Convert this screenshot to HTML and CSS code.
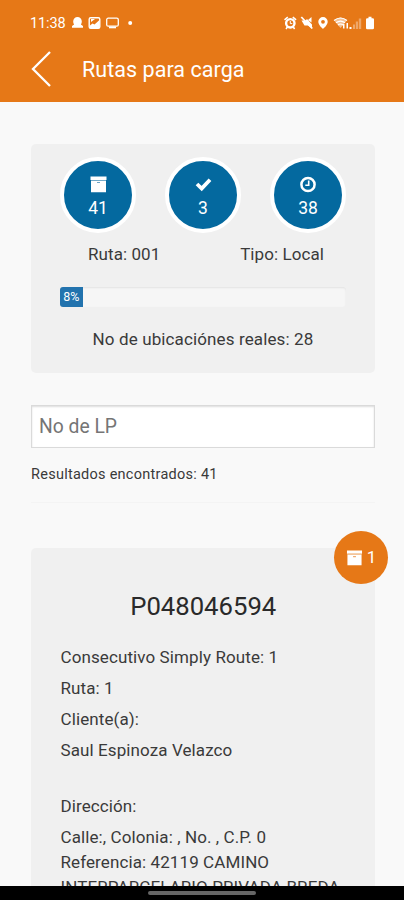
FILE: index.html
```html
<!DOCTYPE html>
<html lang="es">
<head>
<meta charset="utf-8">
<title>Rutas para carga</title>
<link rel="stylesheet" href="styles.css">
</head>
<body>
<header class="header">
  <div class="status">
    <span class="time">11:38</span>
    <svg class="left-icons" width="64" height="14" viewBox="0 0 64 14" fill="#fff">
      <path d="M5.500 1a4.300 4.300 0 0 1 4.300 4.300c0 1.500-.3 2.400-.9 3.200L11 10v1.800H0V10l2.100-1.500C1.500 7.700 1.200 6.800 1.200 5.300A4.300 4.300 0 0 1 5.500 1z"/>
      <rect x="17.200" y="1.700" width="10.600" height="10.600" rx="1.500" fill="none" stroke="#fff" stroke-width="1.400"/>
      <path d="M18 12V9.500l2.500-2 2 1 5-4.500v8zM19 3h4l-4 3z"/>
      <rect x="34.700" y="2.200" width="11.600" height="8" rx="1.500" fill="none" stroke="#fff" stroke-width="1.300"/>
      <path d="M37 10.500h7v1.800h-7z"/>
      <circle cx="58.200" cy="7" r="2"/>
    </svg>
    <svg class="right-icons" width="94" height="14" viewBox="0 0 94 14" fill="#fff">
      <path d="M0 3.300 3.300.6l1 1.200L1 4.500zM12.600 3.300 9.300.6l-1 1.200 3.300 2.700z"/>
      <circle cx="6.300" cy="7.300" r="4.200" fill="none" stroke="#fff" stroke-width="2.400"/>
      <path d="M6.300 5v2.600h2" fill="none" stroke="#fff"/>
      <path d="m2 13 2-3M10.600 13l-2-3" stroke="#fff" stroke-width="1.500"/>
      <path d="M17.500 4.500h4l1.500-1.500 5 5.500v4L24 9.500h-3.500zM24 4l3.500-3v5.500z"/>
      <path d="m17.300 1 11 11.500" stroke="#fff" stroke-width="1.800"/>
      <path fill-rule="evenodd" d="M39 1a4.700 4.700 0 0 1 4.700 4.700C43.700 9 39 13 39 13s-4.700-4-4.700-7.300A4.700 4.700 0 0 1 39 1zm0 2.900a1.900 1.900 0 1 0 0 3.800 1.900 1.900 0 0 0 0-3.800z"/>
      <path d="M50 4.300q6.500-5.500 13 0l-6.500 7.700z" opacity=".55"/>
      <g fill="none" stroke="#fff" stroke-width="1.200"><path d="M50 4.500q6.500-5 13 0M52 6.800q4.500-3.500 9 0M54 9q2.500-2 5 0"/></g>
      <path d="M59 8h1.500v4.500H59zM62.500 7H64v5.500h-1.500z"/>
      <path d="M65.500 11h2v2h-2z"/>
      <path opacity=".35" d="M69 8.500h2V13h-2zM71.800 5.500h2.200V13h-2.200zM74.800 2.500h2.400V13h-2.400z"/>
      <path d="M84.500.8h3v1.500h1.200q1.300 0 1.300 1.300v8.300q0 1.300-1.300 1.300h-5.400Q82 13.200 82 11.900V3.600q0-1.300 1.300-1.300h1.200z"/>
    </svg>
  </div>
  <div class="appbar">
    <svg width="20" height="36" viewBox="0 0 20 36" fill="none" stroke="#fff" stroke-width="2.300"><path d="M19 1 2 18l17 17"/></svg>
    <h1>Rutas para carga</h1>
  </div>
</header>
<main class="content">
  <section class="card summary">
    <div class="stats">
      <div class="stat"><svg width="17" height="17" viewBox="0 0 17 17"><path fill="#fff" d="M.5.500h16V4H.5zM1 4.500h15v11.800H1z"/><path fill="#6fa5c6" d="M1 4h15v.7H1zM7 6h3v1H7z"/></svg><span>41</span></div>
      <div class="stat"><svg width="17" height="17" viewBox="0 0 17 17"><path fill="none" stroke="#fff" stroke-width="3.800" d="m2 8 4.700 4.500L15 3.800"/></svg><span>3</span></div>
      <div class="stat"><svg width="17" height="17" viewBox="0 0 17 17"><g fill="none" stroke="#fff"><circle cx="8" cy="8.500" r="6.600" stroke-width="2.500"/><path d="M8.700 4.500v4.800H5.300" stroke-width="1.600"/></g></svg><span>38</span></div>
    </div>
    <div class="facts"><span>Ruta: 001</span><span>Tipo: Local</span></div>
    <div class="progress"><div class="bar" style="width:8%">8%</div></div>
    <p class="real">No de ubicaciónes reales: 28</p>
  </section>
  <input class="search" type="text" placeholder="No de LP">
  <p class="results">Resultados encontrados: 41</p>
  <hr class="rule">
  <section class="card package">
    <div class="badge"><svg width="17" height="16" viewBox="0 0 17 17"><path fill="#fff" d="M.5.500h16V4H.5zM1 4.500h15v11.800H1z"/><path fill="#efab70" d="M1 4h15v.9H1zM7 6.500h3v1.200H7z"/></svg><span>1</span></div>
    <h2>P048046594</h2>
    <p>Consecutivo Simply Route: 1</p>
    <p>Ruta: 1</p>
    <p>Cliente(a):</p>
    <p>Saul Espinoza Velazco</p>
    <p class="address-label">Dirección:</p>
    <p class="address">Calle:, Colonia: , No. , C.P. 0<br>Referencia: 42119 CAMINO<br>INTERPARCELARIO PRIVADA BREDA</p>
  </section>
</main>
<footer class="navbar"><div class="handle"></div></footer>
</body>
</html>
```
FILE: styles.css
```css
* { box-sizing: border-box; }
body {
  margin: 0;
  width: 404px;
  height: 900px;
  overflow: hidden;
  display: flex;
  flex-direction: column;
  background: #f9f9f9;
  color: #3a3a3a;
  font: 17px/25px Roboto, sans-serif;
}
h1, h2, p { margin: 0; font-weight: 400; }
svg { display: block; flex: none; }
.header { height: 102px; flex: none; background: #e67817; color: #fff; }
.status { display: flex; align-items: center; height: 46px; padding: 0 26px 0 30px; }
.time { width: 42px; font-size: 14.500px; letter-spacing: -.1px; }
.right-icons { margin-left: auto; }
.appbar { display: flex; align-items: center; gap: 31px; height: 46px; padding-left: 31px; }
.appbar h1 { font-size: 21.500px; letter-spacing: .05px; }
.content { flex: 1; min-height: 0; overflow: hidden; padding: 42px 29px 0 31px; }
.card { background: #f0f0f0; border-radius: 5px; }
.summary { height: 229px; padding: 13px 29px 0; }
.stats { display: flex; justify-content: space-between; }
.stat {
  display: flex;
  flex-direction: column;
  align-items: center;
  width: 76px;
  height: 76px;
  padding-top: 15px;
  border: 4px solid #fff;
  border-radius: 50%;
  background: #04699f;
  color: #fff;
  gap: 4px;
}
.stat span { font-size: 17.500px; line-height: 23px; }
.facts { display: flex; justify-content: space-between; padding: 0 22px 0 28px; margin-top: 9px; letter-spacing: .08px; }
.progress {
  height: 20px;
  margin-top: 20px;
  border-radius: 3px;
  background: #f6f6f6;
  box-shadow: inset 0 1px 2px #e2e2e2;
}
.bar {
  height: 100%;
  border-radius: 3px 0 0 3px;
  background: #2273ae;
  color: #fff;
  font-size: 12.500px;
  line-height: 20px;
  text-align: center;
}
.real { margin-top: 20px; text-align: center; letter-spacing: .12px; }
.search {
  display: block;
  width: 100%;
  height: 43px;
  margin-top: 32px;
  padding: 0 8px 1px 7px;
  border: 1px solid #dadada;
  border-radius: 0;
  background: #fff;
  box-shadow: inset 0 1px 2px #ddd;
  font: 19.300px Roboto, sans-serif;
}
.search::placeholder { color: #757575; }
.results { margin-top: 14px; font-size: 14.500px; letter-spacing: .26px; }
.rule { margin: 15px 0 0; border: 0; border-top: 1px solid #f4f4f4; }
.package { position: relative; height: 420px; margin-top: 45px; padding: 46px 20px 0 29.500px; letter-spacing: .1px; }
.badge {
  position: absolute;
  top: -17px;
  right: -13px;
  display: flex;
  align-items: center;
  justify-content: center;
  gap: 4px;
  width: 54px;
  height: 53px;
  border-radius: 50%;
  background: #e67817;
  color: #fff;
}
.package h2 { margin: 0 9px 26px 0; font-size: 25.700px; letter-spacing: 0; text-align: center; color: #2a2a2a; }
.package p { margin-bottom: 6px; }
.package .address-label { margin-top: 31px; }
.navbar { display: flex; justify-content: center; height: 14px; flex: none; padding-top: 5px; background: #000; }
.handle { width: 108px; height: 4px; border-radius: 2px; background: #666; }
```
